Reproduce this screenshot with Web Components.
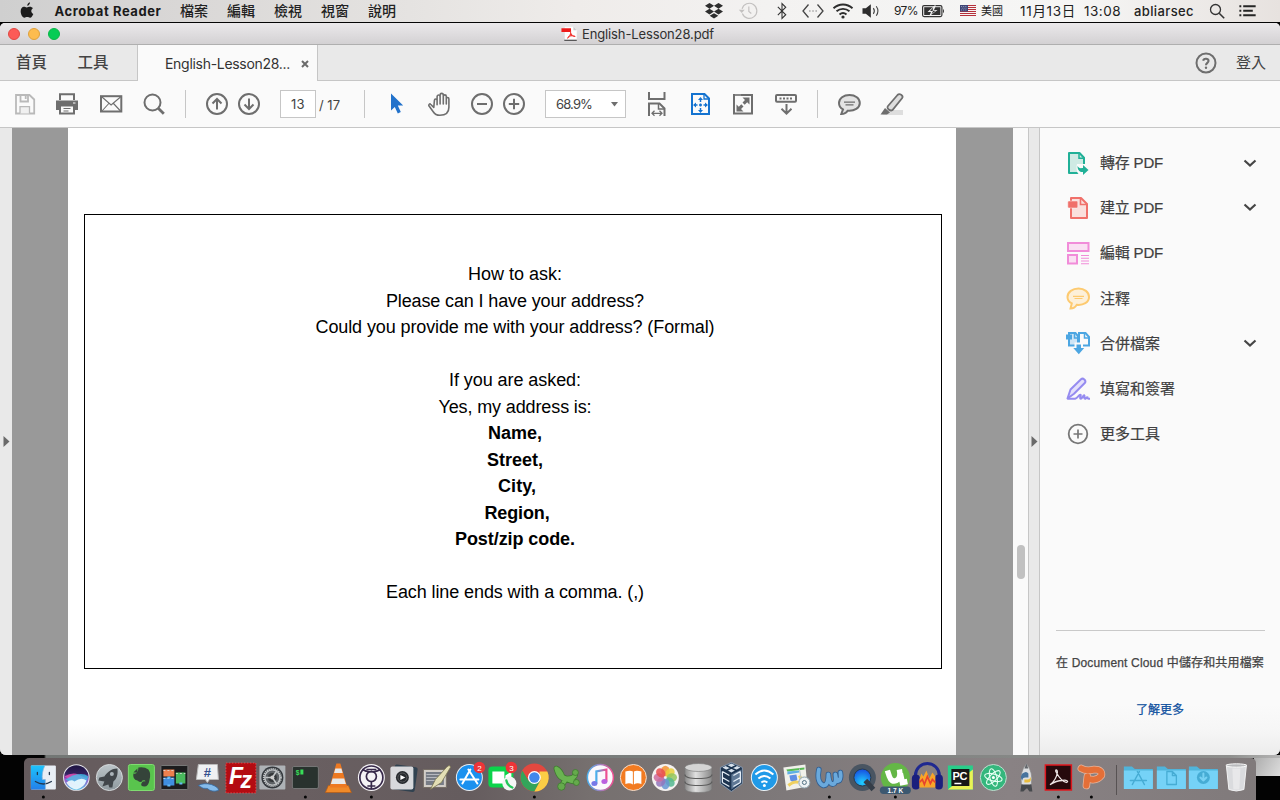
<!DOCTYPE html>
<html lang="zh-Hant">
<head>
<meta charset="utf-8">
<title>English-Lesson28.pdf</title>
<style>
html,body{margin:0;padding:0;width:1280px;height:800px;overflow:hidden;background:#050505}
body{font-family:Inter,"Noto Sans CJK TC",sans-serif;color:#222}
</style>
</head>
<body>
<reader-desktop></reader-desktop>
<script>
const define=(name,html,setup)=>{
  const t=document.createElement('template');t.innerHTML=html;
  customElements.define(name,class extends HTMLElement{
    constructor(){super();this.attachShadow({mode:'open'}).append(t.content.cloneNode(true));}
    connectedCallback(){if(setup)setup(this,this.shadowRoot);}
  });
};

/* Text run tracked to an exact width */
customElements.define('fit-text',class extends HTMLElement{
  connectedCallback(){
    const w=parseFloat(this.getAttribute('w')),s=this.attachShadow({mode:'open'});
    s.innerHTML='<style>:host{display:block;flex:none;white-space:pre}span{display:inline-block;white-space:pre}</style><span></span>';
    const sp=s.querySelector('span');sp.textContent=this.getAttribute('text');
    this.style.width=w+'px';
    const n=[...sp.textContent].length;
    sp.style.letterSpacing=((w-sp.getBoundingClientRect().width)/n)+'px';
  }
});

const G='fill="none" stroke="#6e6e6e" stroke-width="2"';
const ICONS={
apple:'<path fill="#1c1c1c" d="M15.2 5c.2-1.900 1.300-3.300 3-3.900.2 1.900-1.200 3.600-3 3.900zM11.500 6.200c1.300 0 2 .7 3.200.7s2-.8 3.500-.8c1.300 0 2.400.6 3.200 1.600-2.600 1.600-2.100 5.200.5 6.200-.8 2-2 4.200-3.600 4.200-1.200 0-1.600-.7-3.100-.7s-1.900.7-3.100.7c-1.900 0-4-3.600-4-7 0-3.200 1.800-4.900 3.400-4.900z" transform="translate(-4.500 .2) scale(1.1)"/>',
dropbox:'<path fill="#2d2d2d" d="M7.500 4l4.500 2.800-4.500 2.900L3 6.800zM16.500 4L21 6.800l-4.500 2.900L12 6.800zM7.500 9.800l4.500 2.800-4.500 2.900L3 12.600zM16.500 9.800l4.500 2.800-4.500 2.900-4.500-2.900zM12 14.200l4.300 2.600L12 19.500l-4.300-2.700z"/>',
time:'<g fill="none" stroke="#c3c1c0" stroke-width="1.400"><path d="M5.200 15a9 9 0 1 0-.3-5.500"/><path d="M13 6.500v6l3 2.500"/></g><path fill="#c3c1c0" d="M1 10.500h7l-3.500 4z"/>',
bt:'<path fill="none" stroke="#333" stroke-width="1.300" d="M7 7l9.500 9.500L12 21V3l4.500 4.500L7 17"/>',
code:'<path fill="none" stroke="#444" stroke-width="1.300" d="M7.500 5.500L2 12l5.500 6.500M16.500 5.500L22 12l-5.500 6.500"/><path stroke="#aaa" stroke-width="1.600" stroke-dasharray="1.600 1.600" d="M8 12h9"/>',
wifi:'<g fill="none" stroke="#2d2d2d" stroke-width="1.900"><path d="M2.500 9.200c5.500-5 13.500-5 19 0M5.500 12.300c3.800-3.300 9.200-3.300 13 0M8.500 15.400c2.200-1.700 4.800-1.700 7 0"/></g><circle cx="12" cy="18" r="1.600" fill="#2d2d2d"/>',
volume:'<path fill="#2d2d2d" d="M3 8.800h4L13 4v16L7 15.200H3z"/><g fill="none" stroke="#444" stroke-width="1.300"><path d="M16 8.500q2.500 3.500 0 7M19.500 6.300q4 5.700 0 11.400"/></g>',
battery:'<rect x=".6" y="6.600" width="19.300" height="11" rx="1.500" fill="none" stroke="#333" stroke-width="1.200"/><rect x="2.200" y="8.200" width="16.200" height="7.800" fill="#333"/><path fill="#eee" d="M12.500 6.500L5.500 13H9l-2 4.500L15.500 11H12l2-4.500z"/><path fill="#333" d="M11.200 8.500L8 12h3l-1.500 3.200 4-3.500h-3z"/><path fill="#333" d="M21 9.800q2 2.300 0 4.500z"/>',
flag:'<rect x="4" y="7" width="16" height="11" fill="#f5f3f3"/><path stroke="#b5303a" stroke-width="1" d="M4 7.500h16M4 9.500h16M4 11.500h16M4 13.500h16M4 15.500h16M4 17.500h16"/><rect x="4" y="7" width="8" height="6.500" fill="#3d4476"/><path stroke="#bbbfd8" stroke-width=".8" stroke-dasharray=".8 1.100" d="M5 8.500h6M5.800 10.200h5M5 12h6"/>',
spot:'<circle cx="10.500" cy="10.500" r="5" fill="none" stroke="#333" stroke-width="1.300"/><path stroke="#333" stroke-width="1.600" d="M14.200 14.200l5 5"/>',
list:'<path stroke="#252525" stroke-width="2" d="M7 7.500h13M7 12.200h10M7 17h13"/><path stroke="#252525" stroke-width="2" d="M3 7.500h2M3 12.200h2M3 17h2"/>',
pdf:'<path fill="#fdfdfd" d="M5 4h9l3.500 3.500V18H5z"/><path fill="#c9c9c9" d="M14 4l3.500 3.500H14z"/><path stroke="#222" stroke-width="1" d="M4.500 18h13"/><path fill="#ee1c1c" d="M1.500 5.500h10v4h-10z"/><path fill="none" stroke="#f03a36" stroke-width="1.100" d="M11 8.500c.5 3-.5 5.500-3.500 7.500M11 10.500c1 2.500 2.500 4 5 3.500M8.500 14.500c2-1.500 5-1.500 7-.8"/>',
save:'<g fill="none" stroke="#b9b9b9" stroke-width="1.800"><path d="M3 3h13.500L21.200 7.500v14H3z"/><path d="M7.500 3v6.500h7.500V3M12.700 4v3"/><path fill="#f0f0f0" d="M7 21.500v-6.800h9.500v6.800" stroke-width="1.300"/></g>',
print:'<g fill="#6e6e6e"><path d="M1 8.500h22V18H1z"/><path d="M4 8V1.300h16V8h-2V3.300H6V8z"/></g><rect x="5" y="13.500" width="14" height="8" fill="#fafafa" stroke="#6e6e6e" stroke-width="2"/><path stroke="#6e6e6e" d="M8.500 16.500h7M8.500 19h5"/><path stroke="#fff" d="M18 11h2.500"/>',
mail:'<rect x="2" y="4.200" width="20.300" height="15.300" '+G+'/><path fill="none" stroke="#6e6e6e" stroke-width="1.100" d="M3 5l9.100 8L21.500 5M3 19l6.800-7.500M21.500 19l-7-7.500"/>',
find:'<circle cx="10.500" cy="10.500" r="8" '+G+'/><path stroke="#6e6e6e" stroke-width="2.800" d="M16 16l5.800 5.800"/>',
up:'<circle cx="12" cy="12" r="10" '+G+'/><path '+G+' d="M12 17.500V7M7.500 11.500L12 7l4.500 4.500"/>',
down:'<circle cx="12" cy="12" r="10" '+G+'/><path '+G+' d="M12 6.500V17M7.500 12.500L12 17l4.500-4.500"/>',
cursor:'<path fill="#2272cb" d="M6 1.500L18.200 13.500h-5.400l3 6.600-3 1.400-3-6.500L6 18.500z"/>',
hand:'<path fill="#fafafa" stroke="#6e6e6e" stroke-width="1.600" stroke-linejoin="round" d="M6.800 15.500l-3.200-3.200c-.8-.9-2.300.3-1.700 1.500l4.500 6.200c1.500 2.500 3.500 3.300 6.500 3.300 5.500 0 9-2.500 9-8V7c0-2-2.600-2-2.600 0v5V4.500c0-2.200-3-2.200-3 0V12 3c0-2.200-3.200-2.200-3.200 0v9V4.700c0-2.200-3-2.200-3 0v8V8.500c0-2-2.700-2-2.700 0z"/>',
minus:'<circle cx="12" cy="12" r="10" '+G+'/><path '+G+' d="M7 12h10"/>',
plus:'<circle cx="12" cy="12" r="10" '+G+'/><path '+G+' d="M6.800 12h10.400M12 6.800v10.400"/>',
scroll:'<path '+G+' d="M4 0v7h15.500V0M4 24V11.500h10.500l5 5V24"/><path fill="none" stroke="#6e6e6e" stroke-width="1.500" d="M13.500 11.500v5.500h6"/><path stroke="#6e6e6e" stroke-width="1.300" fill="none" d="M7 21.300h10M9.500 18.800L7 21.300l2.500 2.500M14.500 18.800l2.500 2.500-2.500 2.500"/>',
fitpage:'<path fill="none" stroke="#1473d0" stroke-width="2" d="M4 2h12.500l4.500 4.500V22H4z"/><path fill="none" stroke="#1473d0" stroke-width="1.300" d="M16 2v5h5"/><path stroke="#1473d0" stroke-width="1.500" stroke-dasharray="3 1.500" d="M12.500 7v12M6.500 13h12"/><path fill="#1473d0" d="M12.500 5l2.500 3h-5zM12.500 21l2.500-3h-5zM5 13l3-2.500v5zM20 13l-3-2.500v5z"/>',
full:'<rect x="3" y="3" width="18" height="18.500" '+G+'/><path stroke="#ddd" stroke-dasharray="1 1" d="M4.500 3h5"/><path fill="#6e6e6e" d="M18.500 5.500v7l-2.300-2.300-2.500 2.500-2.200-2.200L14 8l-2.500-2.500zM5.500 19.500v-7l2.300 2.300 2.500-2.500 2.200 2.200L10 17l2.500 2.500z"/>',
read:'<rect x="2" y="3" width="20" height="6.800" rx="1" '+G+'/><path stroke="#6e6e6e" stroke-width="2" stroke-dasharray="2 1.500" d="M5.500 6.500H19"/><path '+G+' d="M12.500 12v9.500M7.500 16.800l5 4.900 5-4.900"/>',
comment:'<path fill="#e3e3e3" stroke="#6e6e6e" stroke-width="2" d="M12.500 3C6.500 3 2 6.400 2 11c0 3 1.500 5.200 4 6.400L4.300 22c3 0 5.200-1.500 6.300-3.300C17.500 19.300 22.800 16 22.800 11c0-4.700-4.500-8-10.300-8z"/><path stroke="#6e6e6e" stroke-width="1.200" d="M7 10.200h11M8.500 12.800h8"/>',
mark:'<path fill="#dedede" d="M8 18h15v5H2z"/><path fill="#dedede" stroke="#6e6e6e" stroke-width="1.800" d="M8 14L17.500 3c2-2 6.200.3 4.700 3L12.500 18c-2 1.500-6.500-1.500-4.500-4z"/><path fill="#6e6e6e" d="M5 16l5 4.500-3 2H.5z"/>',
help:'<circle cx="12" cy="12" r="9.500" '+G+'/><path fill="none" stroke="#6e6e6e" stroke-width="2.100" d="M9.200 9.700c.5-2.800 5.500-2.500 5.300.3-.1 1.900-2.500 1.900-2.500 4.200"/><circle cx="12" cy="16.800" r="1.200" fill="#6e6e6e"/>',
export:'<path fill="#cfeae4" stroke="#20b097" stroke-width="2" stroke-linejoin="round" d="M3 2h10.500L18 6.700V22H3z"/><path fill="none" stroke="#20b097" stroke-width="1.500" d="M13 2v5.200h5"/><path fill="#fafafa" d="M11 13h9v11h-6.500c-3-2-3.500-7-2.500-11z"/><path fill="#20b097" d="M11.500 15c1.500 2.500 3 2.200 5.500 2V14l5.500 5-5.500 5v-3c-3 .3-5.500-1.500-5.500-6z"/>',
create:'<path fill="#fadfdc" stroke="#f0706a" stroke-width="2" stroke-linejoin="round" d="M5 2h10l6 6v14H5z"/><path fill="none" stroke="#f0706a" stroke-width="1.600" d="M14.500 2.500V8.500h6"/><rect x="1.800" y="5" width="10" height="7" rx="1" fill="#f0706a" stroke="#fafafa" stroke-width=".5"/>',
edit:'<g fill="#fae0f3" stroke="#f18cd9" stroke-width="2"><rect x="2" y="2" width="20.500" height="8"/><rect x="2" y="14" width="9" height="8.500"/></g><path stroke="#f18cd9" stroke-width="1.100" d="M15 14.500h8M15 17.300h8M15 20h8M15 22.700h8"/>',
note:'<path fill="#fdf0d9" stroke="#fdca70" stroke-width="2" d="M12.500 2.500C6.500 2.500 1.500 6 1.500 11c0 3 1.700 5.200 4.300 6.400L4.500 22.500c3 0 5.200-1.800 6.300-3.700 6.500.7 12.200-2.300 12.200-7.800 0-5-4.700-8.500-10.500-8.500z"/><path stroke="#fdca70" stroke-width="1.200" d="M7 10.300h11M8.500 12.500h8"/>',
combine:'<g fill="#fafafa" stroke="#4ca6e2" stroke-width="2"><path fill="#cfe5f5" d="M3 14.500V2h6.500l2.500 3v9.500z"/><path d="M13 14.500V2h6.500L23 6v8.500z"/></g><path fill="#4ca6e2" d="M0 3.500h6v5H0z"/><path fill="none" stroke="#4ca6e2" stroke-width="1.500" d="M18.500 2v5H23M8.500 2v5H12"/><path fill="#fafafa" d="M8.500 11.500h8.500v7H8.500z"/><path fill="#4ca6e2" d="M10.500 13.500h4.500V17h3.200l-5.400 6.300L7.300 17h3.200z"/>',
sign:'<path fill="#e4e0fb" stroke="#958bf0" stroke-width="2" stroke-linejoin="round" d="M1.500 21.500l3-9L15 2.300c2-1.800 5.500 1 4 3.500l-11 11-6.500 4.700z"/><path fill="none" stroke="#958bf0" stroke-width="2" d="M1.500 21.800H9c3-1 3.500-4 5.300-4 1.500 0-1.500 4 .5 4 1.500 0 2.200-4 3.500-3.500 1 .5-1 3.500.7 3.500 1 0 1.500-2 2.500-1.500-.2 1.500 1 1.500 2.500 1.500"/>',
more:'<circle cx="12" cy="12" r="9.300" fill="none" stroke="#777" stroke-width="1.800"/><path stroke="#777" stroke-width="1.700" d="M7.500 12h9M12 7.500v9"/>',
chev:'<path fill="none" stroke="#454545" stroke-width="2.200" d="M6.500 9.500l5.500 5 5.500-5"/>'
};
define('ui-icon','<style>:host{display:block;flex:none;width:24px;height:24px}svg{display:block;width:100%;height:100%;overflow:visible}</style><svg viewBox="0 0 24 24"></svg>',
 (h,s)=>{s.querySelector('svg').innerHTML=ICONS[h.getAttribute('name')];});

define('menu-bar',`<style>
:host{display:flex;align-items:center;height:22px;box-sizing:border-box;padding-left:17px;font-size:13px;line-height:22px;color:#222;
background:linear-gradient(90deg,#cfcfcf 0,#d9d7d6 14%,#e5e3e1 32%,#efecea 45%,#f3f2f1 60%,#f6f6f5 84%,#e7e2df 100%)}
.s{width:20px;height:20px}
fit-text{margin-left:19px}.b{font-weight:700;color:#1a1a1a}
.m{font-size:14px;font-weight:500}
</style>
<ui-icon name="apple" class="s"></ui-icon>
<fit-text class="b" w="107" text="Acrobat Reader" style="margin-left:17.500px"></fit-text>
<fit-text class="m" w="28" style="margin-left:18.500px" text="檔案"></fit-text><fit-text class="m" w="28" text="編輯"></fit-text><fit-text class="m" w="28" text="檢視"></fit-text><fit-text class="m" w="28" text="視窗"></fit-text><fit-text class="m" w="28" text="說明"></fit-text>
<ui-icon name="dropbox" style="margin-left:306px"></ui-icon>
<ui-icon class="s" name="time" style="margin-left:12px;margin-top:-1px"></ui-icon>
<ui-icon class="s" name="bt" style="margin-left:14px"></ui-icon>
<ui-icon name="code" style="margin-left:9px"></ui-icon>
<ui-icon name="wifi" style="margin-left:6px;margin-top:-1px"></ui-icon>
<ui-icon class="s" name="volume" style="margin-left:5px"></ui-icon>
<fit-text w="24" style="font-size:12px;margin-left:14px" text="97%"></fit-text>
<ui-icon name="battery" style="margin-left:4px;margin-top:-1px"></ui-icon>
<ui-icon name="flag" style="margin-left:10px;margin-top:-3px"></ui-icon>
<fit-text w="22" style="font-size:11px;margin-left:1px" text="美國"></fit-text>
<fit-text w="56" style="font-size:13.500px;margin-left:17px" text="11月13日"></fit-text>
<fit-text w="37" style="font-size:13.500px;margin-left:8px" text="13:08"></fit-text>
<fit-text w="60" style="font-size:13px;margin-left:13px;font-weight:500" text="abliarsec"></fit-text>
<ui-icon name="spot" style="margin-left:11px;width:24px;height:24px"></ui-icon>
<ui-icon name="list" style="margin-left:7px;width:24px;height:23px;margin-top:-1px"></ui-icon>`);

define('title-bar',`<style>
:host{display:flex;align-items:center;height:21px;padding-left:8px;border-bottom:1px solid #afafaf;background:linear-gradient(#ebe9eb,#d3d1d3);box-sizing:content-box}
i{width:10px;height:10px;border-radius:50%;border:1px solid;margin-right:8px;flex:none}
fit-text{font-size:13px;color:#303030;line-height:21px;margin-top:1px}
</style><i style="background:#fc5b57;border-color:#e04843"></i><i style="background:#fdbc4f;border-color:#dfa03c"></i><i style="background:#05cc55;border-color:#0cb648"></i>
<ui-icon name="pdf" style="width:23px;height:23px;margin:2px 0 0 492px"></ui-icon><fit-text w="132" style="margin-left:-1px" text="English-Lesson28.pdf"></fit-text>`);

define('tab-strip',`<style>
:host{display:flex;height:36px;background:#e9e9e9;color:#444}
.home{box-sizing:border-box;border-right:1px solid #c6c6c6;border-bottom:1px solid #c6c6c6;display:flex;padding-left:16px;line-height:36px;font-size:15.500px;font-weight:500;width:138px}
.tab{width:179px;background:#fafafa;display:flex;padding-left:27px;box-sizing:border-box;line-height:38px;font-size:14px;color:#333}
.rest{flex:1;border-left:1px solid #c6c6c6;border-bottom:1px solid #c6c6c6;display:flex;align-items:center;line-height:34px;font-size:15px}
svg{margin:15px 0 0 11px;display:block}
</style>
<div class="home"><fit-text w="31" text="首頁"></fit-text><fit-text w="31" style="margin-left:30.500px" text="工具"></fit-text></div>
<div class="tab"><fit-text w="125" text="English-Lesson28..."></fit-text><svg width="8" height="8" viewBox="0 0 8 8"><path stroke="#6b6b6b" stroke-width="2" d="M1 1l6 6M7 1L1 7"/></svg></div>
<div class="rest"><ui-icon name="help" style="margin-left:876px"></ui-icon><fit-text w="30" style="margin-left:18px" text="登入"></fit-text></div>`);

define('tool-bar',`<style>
:host{display:flex;align-items:center;height:46px;background:#fafafa;border-bottom:1px solid #c6c6c6;padding-left:13px;color:#444}
.sep{width:1px;height:28px;background:#c6c6c6;margin:0 0 0 19px;flex:none}
ui-icon{margin-left:19px}
.box{box-sizing:border-box;height:28px;border:1px solid #c6c6c6;background:#fff;margin-left:19px;display:flex;line-height:27px;font-size:13px;flex:none;padding-left:10px}
.box svg{margin:11px 0 0 18px}
</style>
<ui-icon name="save" style="margin-left:0"></ui-icon><ui-icon name="print" style="margin-left:18px"></ui-icon><ui-icon name="mail" style="margin-left:20px"></ui-icon><ui-icon name="find"></ui-icon>
<div class="sep"></div><ui-icon name="up"></ui-icon><ui-icon name="down" style="margin-left:8px"></ui-icon>
<div class="box" style="width:36px"><fit-text w="14" text="13"></fit-text></div><fit-text w="21" style="margin:2px 0 0 3px;font-size:13px" text="/ 17"></fit-text>
<div class="sep" style="margin-left:24px"></div><ui-icon name="cursor" style="margin-left:20px"></ui-icon><ui-icon name="hand" style="margin-left:18px"></ui-icon><ui-icon name="minus"></ui-icon><ui-icon name="plus" style="margin-left:8px"></ui-icon>
<div class="box" style="width:81px"><fit-text w="36" text="68.9%"></fit-text><svg width="9" height="5"><path fill="#6e6e6e" d="M1 0h7L4.500 4.500z"/></svg></div>
<ui-icon name="scroll"></ui-icon><ui-icon name="fitpage" style="margin-left:18.500px;margin-right:.5px"></ui-icon><ui-icon name="full"></ui-icon><ui-icon name="read"></ui-icon>
<div class="sep"></div><ui-icon name="comment"></ui-icon><ui-icon name="mark"></ui-icon>`);

define('pdf-page',`<style>
:host{display:block;width:888px;box-sizing:border-box;background:#fff;padding:86px 0 0 16px;flex:none;overflow:hidden}
.frame{width:858px;height:455px;box-sizing:border-box;border:1px solid #000;padding:46.400px 0 0 4px;font:18px/26.500px "Liberation Sans",Arial,sans-serif;color:#000;display:flex;flex-direction:column;align-items:center}
.frame fit-text{height:26.500px}b{display:contents;font-weight:700}.gap{height:26.500px}
</style><div class="frame">
<fit-text w="94" text="How to ask:"></fit-text><fit-text w="258" text="Please can I have your address?"></fit-text><fit-text w="399" text="Could you provide me with your address? (Formal)"></fit-text>
<div class="gap"></div><fit-text w="132" text="If you are asked:"></fit-text><fit-text w="153" text="Yes, my address is:"></fit-text>
<b><fit-text w="54" text="Name,"></fit-text><fit-text w="56" text="Street,"></fit-text><fit-text w="38" style="margin-left:4px" text="City,"></fit-text><fit-text w="65" style="margin-left:4px" text="Region,"></fit-text><fit-text w="120" text="Post/zip code."></fit-text></b>
<div class="gap"></div><fit-text w="258" text="Each line ends with a comma. (,)"></fit-text></div>`);

define('pane-handle',`<style>:host{display:flex;align-items:center;justify-content:center;background:#e9e9e9;box-sizing:border-box;width:12px;flex:none}svg{display:block}</style><svg width="7" height="11"><path fill="#6a6a6a" d="M.5 0L6.500 5.500l-6 5.500z"/></svg>`);

define('tool-panel',`<style>
:host{display:flex;flex-direction:column;flex:1;background:linear-gradient(#fafafa 0,#fafafa 92%,#f6f6f6 96%,#ececec 100%);padding-top:12px;box-sizing:border-box;min-width:0}
.row{display:flex;align-items:center;height:45.200px;padding:0 18px 0 26px;color:#404040;font:15px "Liberation Sans","Noto Sans CJK TC",sans-serif}
.row fit-text{margin:-2px 0 0 10px;-webkit-text-stroke:.2px}.row ui-icon:last-child:not(:first-child){margin-left:auto}
.line{height:1px;background:#c9c9c9;margin:174px 15px 0 16px}
.foot{display:flex;flex-direction:column;align-items:center;font:400 12px/18px "Liberation Sans","Noto Sans CJK TC",sans-serif;color:#444;padding-top:23px}
.foot fit-text{-webkit-text-stroke:.25px}
</style>
<div class="row"><ui-icon name="export"></ui-icon><fit-text w="63" text="轉存 PDF"></fit-text><ui-icon name="chev"></ui-icon></div>
<div class="row"><ui-icon name="create"></ui-icon><fit-text w="63" text="建立 PDF"></fit-text><ui-icon name="chev" style="margin-top:-2px"></ui-icon></div>
<div class="row"><ui-icon name="edit"></ui-icon><fit-text w="63" text="編輯 PDF"></fit-text></div>
<div class="row"><ui-icon name="note"></ui-icon><fit-text w="30" text="注釋"></fit-text></div>
<div class="row"><ui-icon name="combine"></ui-icon><fit-text w="60" text="合併檔案"></fit-text><ui-icon name="chev"></ui-icon></div>
<div class="row"><ui-icon name="sign"></ui-icon><fit-text w="75" text="填寫和簽署"></fit-text></div>
<div class="row"><ui-icon name="more"></ui-icon><fit-text w="60" text="更多工具"></fit-text></div>
<div class="line"></div>
<div class="foot"><fit-text w="208" text="在 Document Cloud 中儲存和共用檔案"></fit-text><fit-text w="48" style="color:#0d4f9e;margin-top:29px" text="了解更多"></fit-text></div>`);

define('reader-window',`<style>
:host{display:flex;flex-direction:column;height:732px;border-radius:5px 5px 6px 6px;overflow:hidden;background:#fafafa}
.work{display:flex;flex:1;background:#999;min-height:0}
.pad{width:56px;flex:none}.pad2{width:57px;flex:none}
.scroll{width:15px;background:#fafafa;flex:none;padding:417px 0 0 4px;box-sizing:border-box}
.scroll div{width:8px;height:34px;border-radius:4px;background:#c1c1c1}
.r{border-left:1px solid #c6c6c6;border-right:1px solid #c6c6c6}
pdf-page{background:linear-gradient(#fff 95%,#f1f1f1)}
</style>
<title-bar></title-bar><tab-strip></tab-strip><tool-bar></tool-bar>
<div class="work"><pane-handle></pane-handle><div class="pad"></div><pdf-page></pdf-page><div class="pad2"></div><div class="scroll"><div></div></div><pane-handle class="r"></pane-handle><tool-panel></tool-panel></div>`);

/* Dock artwork: origin at the centre of each 32.75px cell */
const L='fill="none" stroke-linecap="round" stroke-linejoin="round"';
const W_SHAPE='M-10.500-8Q-13 5-6 8-1 8-1-3M-1-3Q0 9 5 6 7 4 6-3M6-3Q7 5 10 3 12 0 11-5';
const X_SHAPE='M-11-9Q-7-7-5-1 0 3 7 4M-11-9Q-8 3 0 1 8 1 8-4M-1 1Q-4 5-6 9';
const D={
finder:'<rect x="-12.500" y="-12" width="25" height="24" rx="1" fill="#e9eef5"/><path fill="url(#face)" d="M-12.500-12H1.500C-1-7-1.500-2-1 2h3v10h-14.500z"/><path '+L+' stroke="#243850" stroke-width="1.300" d="M-6-5v2M6-5v2M-8 4q8 5 16 0"/><path '+L+' stroke="#8fb5d5" stroke-width=".7" d="M1.500-12C-1-7-1.500-2-1 2h3q0 5 0 10"/>',
siri:'<circle r="13.300" fill="#e6e6ec"/><circle r="12.300" fill="url(#siri)"/><path fill="#e750b5" opacity=".8" d="M-12-1Q-4-6 2-3L10 1 2 6z"/><path fill="#39c8ee" opacity=".75" d="M-11 2Q4-7 12-1 10 9 0 7z"/><path fill="#effcff" opacity=".9" d="M-10 5Q-5 1-2 4 5-1 10 3 8 10 0 12-7 11-10 5z"/>',
launch:'<circle r="13" fill="url(#moon)" stroke="#d6dadc"/><path fill="#41464a" d="M8-9C1-9-3-4-5-1l-5 1-1 3 6 1-2 5 6-2 1 3h3l1-6C7 2 9-3 8-9z"/><circle cx="2.500" cy="-3.500" r="2" fill="#abb4b9"/>',
evernote:'<rect x="-13" y="-13" width="26" height="26" rx="2" fill="#59c44d" stroke="#80dc71"/><path fill="#35443a" d="M-3-10q6-1 10 2 3 4 1 11-1 6-5 6-4 0-3-3t4-2q0-2-3-1-1 3-5 0Q-9 2-8-4q5 1 5-6zM-4-9v4h-4z"/>',
mosaic:'<rect x="-13.500" y="-12" width="27" height="24" rx="1" fill="#1c1c1e" stroke="#777"/><path fill="#ed804e" d="M-11-8h11v7h-11z"/><path fill="#49b95d" d="M1.500-5h9.500v11H1.500z"/><path fill="#408fe0" d="M-11 0h11v8h-11z"/><path stroke="#ddd" stroke-width=".8" stroke-dasharray="2 2" d="M-11-7H0M1.500-4H11M-11 1H0"/><path fill="#61baf7" d="M-7-1h3v2h-3zM5 5h3v2H5zM-7 7h3v2h-3z"/>',
colloquy:'<path fill="#f0f1f3" stroke="#bbb" d="M-9-13H10L11 2H2L0 5-2 2h-9z"/><text y="-1" text-anchor="middle" font-size="13" font-weight="700" fill="#344f8d" font-family="Liberation Sans">#</text><path fill="#86bbea" stroke="#3268a1" stroke-width=".8" d="M-9 8Q-4 5 4 7 12 10 11 13 4 15 0 11-4 12-9 8z"/>',
fz:'<rect x="-14.500" y="-14.500" width="30" height="30" fill="#b40c12"/><rect x="-14.500" y="-14.500" width="30" height="30" fill="none" stroke="#de4b4e" stroke-dasharray="1.500 1.500"/><text x="-11.500" y="6.500" font-size="23" font-weight="700" font-style="italic" fill="#fff" font-family="Liberation Sans">F<tspan dx="-2.500" dy="3.500">z</tspan></text>',
prefs:'<rect x="-13" y="-12" width="26" height="24" rx="1" fill="#aeb2b6"/><circle r="11" fill="#34383d"/><circle r="8.500" fill="#5e6266" stroke="#c1c4c6" stroke-width="2" stroke-dasharray="1.200 .8"/><circle r="7.500" fill="none" stroke="#c1c4c6" stroke-width="1.200"/><circle r="4.500" fill="#34373a"/><path stroke="#c1c4c6" stroke-width="1.600" d="M0 0h-7M0 0L4-6M0 0l4 6"/><circle r="2" fill="#ccc"/>',
term:'<rect x="-13" y="-11" width="26" height="22" rx="1.500" fill="#29322e" stroke="#757575"/><text x="-10" y="-3" font-size="7" font-weight="700" fill="#38dd58" font-family="Liberation Mono">$</text><path fill="#38dd58" d="M-5-8h3v5h-3z"/>',
vlc:'<path fill="#f08a29" stroke="#b75c13" stroke-width=".7" d="M-10 8H10l3 7h-26z"/><path fill="#ee7921" d="M-2-14h4l7 24H-9z"/><path fill="#e8e8e8" d="M-3-9h6l1.300 4.500h-8.600zM-5.800 1H5.800l1.700 5.500h-15z"/>',
tor:'<circle r="13.500" fill="#f4f2f5"/><g fill="none" stroke="#37294a" stroke-width="1.700"><circle r="11.500"/><circle cy="-1" r="5"/><path d="M-9-8Q-4-5 0-6 4-5 9-8M-5-8h10M0 4v8M-4 8.500h8"/></g>',
music:'<rect x="-10" y="-12" width="23" height="25" rx="2" fill="#314250" transform="rotate(8)"/><rect x="-13" y="-11" width="23" height="23" rx="2" fill="#d8d9dc"/><circle cx="-1" r="6.500" fill="#26292d"/><circle cx="-1" r="4.500" fill="none" stroke="#57595c"/><path fill="#fff" d="M-3-2.500L2 0l-5 2.500z"/>',
script:'<rect x="-13" y="-8" width="23" height="18" fill="#d2cdc8" stroke="#776f67"/><rect x="-10.500" y="-5.500" width="18" height="13" fill="#777c86"/><path stroke="#c8c9cf" stroke-width=".8" d="M-10-3H5M-10 0H5M-10 3H5"/><path fill="#e4dfb5" stroke="#777250" stroke-width=".8" d="M10-10q4-4 4 0L5 5-6 12-1 2z"/>',
store:'<circle r="13.500" fill="#e8eef4"/><circle r="12.500" fill="#1b91ef"/><path '+L+' stroke="#fff" stroke-width="2" d="M-7 6L1-8M-1-8L8 6M-9 2H9"/><circle cx="10" cy="-10" r="5.800" fill="#ed3438"/><text x="10" y="-7" font-size="8" text-anchor="middle" fill="#fff" font-family="Liberation Sans">2</text>',
facetime:'<rect x="-14" y="-11" width="25" height="21" rx="4" fill="#0cd34b"/><path fill="#fff" d="M-10-6H2v12h-12zM3-2l6-4V6L3 2z"/><circle cx="7" cy="6" r="7" fill="#f5f5f5"/><path '+L+' stroke="#24c65a" stroke-width="2.300" d="M4 3q1 5 6 7"/><circle cx="9" cy="-10" r="5.800" fill="#ed3438"/><text x="9" y="-7" font-size="8" text-anchor="middle" fill="#fff" font-family="Liberation Sans">3</text>',
chrome:'<circle r="14" fill="#e2483f"/><path fill="#33a45a" d="M-12-7A14 14 0 0 0 0 14L6 3H-6z"/><path fill="#fbcd45" d="M5-6H13A14 14 0 0 1 0 14L6 3z"/><circle r="6.500" fill="#fff"/><circle r="5.200" fill="#4287ea"/>',
excel:'<path '+L+' stroke="#3f7b30" stroke-width="5.500" d="'+X_SHAPE+'"/><path '+L+' stroke="#6ab451" stroke-width="4" d="'+X_SHAPE+'"/><g fill="#65aa4c" stroke="#3f7b30" stroke-width=".8"><circle cx="8" cy="-5" r="3"/><circle cx="-6" cy="9" r="3.700"/><circle cx="9" cy="5" r="3"/></g>',
itunes:'<circle r="13" fill="#fbf8fc" stroke="url(#tune)" stroke-width="1.500"/><path fill="none" stroke="url(#tune)" stroke-width="2.200" d="M-4 6V-6L6-8V4"/><ellipse cx="-6" cy="6" rx="3" ry="2.500" fill="#7778e8"/><ellipse cx="4" cy="4" rx="3" ry="2.500" fill="#bb60e0"/>',
books:'<circle r="13" fill="#f27b22" stroke="#f5e0d0"/><path fill="#fff" d="M-8-6q5-1.500 7.500 0V7q-3-2-7.500-.5zM8-6Q3-7.500.5-6V7q3-2 7.500-.5z"/>',
photos:'<circle r="13.500" fill="#f4f1f0"/>'+['#f29331','#e8cf39','#92c55e','#54b892','#6596d4','#9277bd','#ce6c9e','#e74f50'].map((c,i)=>`<ellipse cy="-6.500" rx="4.200" ry="5.200" fill="${c}" opacity=".85" transform="rotate(${i*45})"/>`).join(''),
db:'<g stroke="#777" stroke-width=".6"><path fill="url(#metal)" d="M-13.500-10V11q0 4 13.500 4t13.500-4v-21z"/><ellipse cy="-10" rx="13.500" ry="4" fill="#d4d4d4"/><path fill="none" stroke="#5c5c5c" stroke-width="1.200" d="M-13.500-3q0 4 13.500 4t13.500-4M-13.500 4q0 4 13.500 4t13.500-4"/></g>',
vbox:'<path fill="#1d3450" stroke="#8fa5be" stroke-width=".8" d="M0-15L11-10V6L0 14-11 6v-16z"/><path fill="#d6e0eb" d="M0-14l9 4-9 5-9-5z"/><path stroke="#19324e" stroke-width="1.500" d="M-5-12L5-7M5-12L-5-7"/><path fill="#5f7895" d="M0-3L10-8V5L0 12z"/><path stroke="#e4edf6" stroke-width="1.300" fill="none" d="M-9-6l7 4M-9 0l7 4M-9 5l7 4M2-2l7-4M2 4l7-4M2 9l7-4M-9-6V5M9-6V5"/>',
wifi:'<circle r="13.500" fill="#e8f1f6"/><circle r="12.500" fill="#209ae8"/><g fill="none" stroke="#fff" stroke-width="2"><path d="M-9-3q9-8 18 0M-6 1q6-5 12 0M-3 5q3-2.500 6 0"/></g><circle cy="8" r="1.500" fill="#fff"/>',
maps:'<path fill="#f1f1eb" d="M-13-10l22-3 2 22-21 4z"/><path fill="#57ba53" d="M-10-8L8-10v2l-17 2z"/><path fill="#5eb0e5" d="M-9-6L3-7v2L-9-3z"/><path fill="#5e8ee5" d="M-7-2l7-1 1 5q-3 4-7 1z"/><path stroke="#f0d160" stroke-width="3" fill="none" d="M-8 8q6-5 10-3M3-2l3 6"/><path stroke="#b9c4c9" d="M3-9l3 18"/><circle cx="8" cy="5" r="5.500" fill="#eef2f4" stroke="#8fa5b1"/><circle cx="8" cy="5" r="2" fill="none" stroke="#527182"/>',
word:'<path '+L+' stroke="#315f92" stroke-width="5.500" d="'+W_SHAPE+'"/><path '+L+' stroke="#6aa9dc" stroke-width="3.800" d="'+W_SHAPE+'"/>',
quick:'<circle r="13.500" fill="#495562"/><circle r="8.500" fill="url(#qt)" stroke="#263b4d" stroke-width="1"/><path stroke="#353d48" stroke-width="5" d="M3 3l8 9"/>',
utorrent:'<circle cy="0" r="14.500" fill="#64b746"/><path fill="none" stroke="#fff" stroke-width="5.500" d="M-8-7l2 6q2 6 7 4 5-2 3-11M5-4l2 9 5-1"/><rect x="-15.500" y="9" width="31" height="7.500" rx="3.700" fill="#3c5870"/><text y="15" text-anchor="middle" font-size="6.500" font-weight="700" fill="#fff" font-family="Liberation Sans">1.7 K</text>',
audacity:'<path fill="none" stroke="#1f2990" stroke-width="3" d="M-12 3V-2a12 12 0 0 1 24 0v5"/><rect x="-15.500" y="-3" width="8" height="15" rx="4" fill="#1b1f7d"/><rect x="7.500" y="-3" width="8" height="15" rx="4" fill="#1b1f7d"/><path fill="#f8a529" d="M-8 2l2-6 2 3 3-6 3 8 3-6 3 4v11H-8z"/><path fill="none" stroke="#e7432e" stroke-width="1.700" d="M-8 5l3-3 2 5 3-8 3 7 2-4 3 3"/>',
pycharm:'<path fill="#29ce8a" d="M-12.500-12h25v24h-25z"/><path fill="#eaf255" d="M12.500-8v20h-25z"/><path fill="#171717" d="M-9-8.500H9v17H-9z"/><text x="-8" y="2" font-size="11" font-weight="700" fill="#fff" font-family="Liberation Sans" textLength="15">PC</text><path stroke="#fff" stroke-width="1.500" d="M-6 6H1"/>',
atom:'<circle r="13" fill="#34b77d" stroke="#c3ded1"/><g fill="none" stroke="#e5fff3" stroke-width="1.100"><ellipse rx="9" ry="3.500" transform="rotate(15)"/><ellipse rx="9" ry="3.500" transform="rotate(75)"/><ellipse rx="9" ry="3.500" transform="rotate(135)"/></g><circle r="1.500" fill="#fff"/>',
rocket:'<path fill="#dcdee1" stroke="#888" stroke-width=".7" d="M0-14Q7-5 5 6l-2 3h-6l-2-3Q-7-5 0-14z"/><path fill="#47739e" d="M-4-4q4-3 6 0v4h-3q-3 0-3 3-3-3 0-7z"/><path fill="#e9bd3f" d="M4-1q2 6-3 6h-3V2h3q3 0 3-3z"/><path fill="#46494d" d="M-5 7H5l1 7H3L1 11l-1 0-3 3h-3z"/><path fill="#62656a" d="M-2-9L0-14 2-9z"/>',
acro:'<rect x="-13" y="-12.500" width="26" height="25" fill="#26090c" stroke="#df171e" stroke-width="1.500"/><path '+L+' stroke="#ede4e4" stroke-width="1.300" d="M-8 7Q-2 2-1-5c0-4-3-3-1 0Q2 3 8 5c3-1 0-3-4-2Q-2 3-8 7z"/>',
ppt:'<path '+L+' stroke="#e6b49c" stroke-width="7.500" d="M-10-9Q-5-6 3-8 11-8 10-2 6 3 0 2M-4-1L-5 8"/><path '+L+' stroke="#e46f38" stroke-width="6" d="M-10-9Q-5-6 3-8 11-8 10-2 6 3 0 2M-4-1L-5 8"/>',
trash:'<path fill="#dadbde" stroke="#f2f2f3" d="M-10-12H10L7.500 12q-7.500 3-15 0z"/><ellipse cy="-12" rx="10.500" ry="1.700" fill="#b9babd" stroke="#fafafa"/><path fill="#e8e8ea" d="M-4-9H4L3 12h-6z"/>'
};
const FOLD=x=>'<path fill="#50b4da" d="M-14.500-11h8l3 2.500h18V11h-29z"/><path fill="#75d2f7" d="M-14.500-7h29V11.500h-29z"/>'+x;
D.apps=FOLD('<path '+L+' stroke="#46acd4" stroke-width="1.500" d="M-6 7L1-6M-1-6L6 7M-8 3H8"/>');
D.docs=FOLD('<path '+L+' stroke="#46acd4" stroke-width="1.300" d="M-4.500-6H1L5-2V7h-9.500zM1-6v4h4"/>');
D.downloads=FOLD('<circle r="6.500" fill="#46acd4"/><path '+L+' stroke="#78d1f3" stroke-width="2" d="M0-4V3M-3 0l3 3 3-3"/>');
define('dock-item',`<style>:host{display:block;width:32.750px;height:42px;flex:none}svg{display:block;overflow:visible;width:32.750px;height:42px}</style>
<svg viewBox="-16.375 -19.500 32.750 42"><defs>
<linearGradient id="siri" x1="0" y1="0" x2="0" y2="1"><stop stop-color="#1d1440"/><stop offset=".35" stop-color="#32205f"/><stop offset=".55" stop-color="#9b4cc5"/><stop offset="1" stop-color="#55c2e8"/></linearGradient>
<linearGradient id="face" x1="0" y1="0" x2="0" y2="1"><stop stop-color="#1cc3fb"/><stop offset="1" stop-color="#2480ea"/></linearGradient>
<linearGradient id="moon" x1="0" y1="0" x2="0" y2="1"><stop stop-color="#bcc5c9"/><stop offset="1" stop-color="#8f999e"/></linearGradient>
<radialGradient id="qt" cx=".5" cy=".8" r=".8"><stop stop-color="#20d0ff"/><stop offset="1" stop-color="#164be0"/></radialGradient>
<linearGradient id="tune"><stop stop-color="#4bafec"/><stop offset="1" stop-color="#f04f91"/></linearGradient>
<linearGradient id="metal"><stop stop-color="#8a8a8a"/><stop offset=".4" stop-color="#e0e0e0"/><stop offset="1" stop-color="#888"/></linearGradient></defs><g></g></svg>`,
(h,s)=>{s.querySelector('g').innerHTML=D[h.getAttribute('app')]+(h.hasAttribute('on')?'<circle cy="19.500" r="1.500" fill="#050505"/>':'');});

const item=n=>`<dock-item app="${n.replace('*','')}"${n.endsWith('*')?' on':''}></dock-item>`;
define('app-dock',`<style>:host{display:flex;box-sizing:border-box;height:42px;width:1232px;padding-left:3px;border-radius:5px 5px 0 0;background:linear-gradient(90deg,#655b5d 0,#695f61 22%,#655c5e 36%,#76706f 46%,#7d7879 60%,#898284 80%,#807a7b 100%)}.sep{width:1px;height:30px;background:#575253;margin:7px 5px 0 8px;flex:none}</style>
${'finder* siri launch evernote mosaic colloquy fz prefs term* vlc tor* music script store facetime chrome* excel itunes books photos db vbox wifi maps word* quick utorrent* audacity pycharm atom rocket acro* ppt*'.split(' ').map(item).join('')}<div class="sep"></div>${'apps docs downloads trash'.split(' ').map(item).join('')}`);

define('reader-desktop',`<style>
:host{display:flex;flex-direction:column;width:1280px;height:800px;background:#050505}
reader-window{margin-top:1px;flex:none}
.bottom{flex:1;padding:3px 24px 0;background:linear-gradient(90deg,transparent 44px,#737775 46px,#797d7b 50%,#8d8e8c 96%,#b5b5b5) top/100% 3px no-repeat,linear-gradient(120deg,#aaa,#ddd) right top/26px 21px no-repeat,#030303}
</style><menu-bar></menu-bar><reader-window></reader-window><div class="bottom"><app-dock></app-dock></div>`);
</script>
</body>
</html>
